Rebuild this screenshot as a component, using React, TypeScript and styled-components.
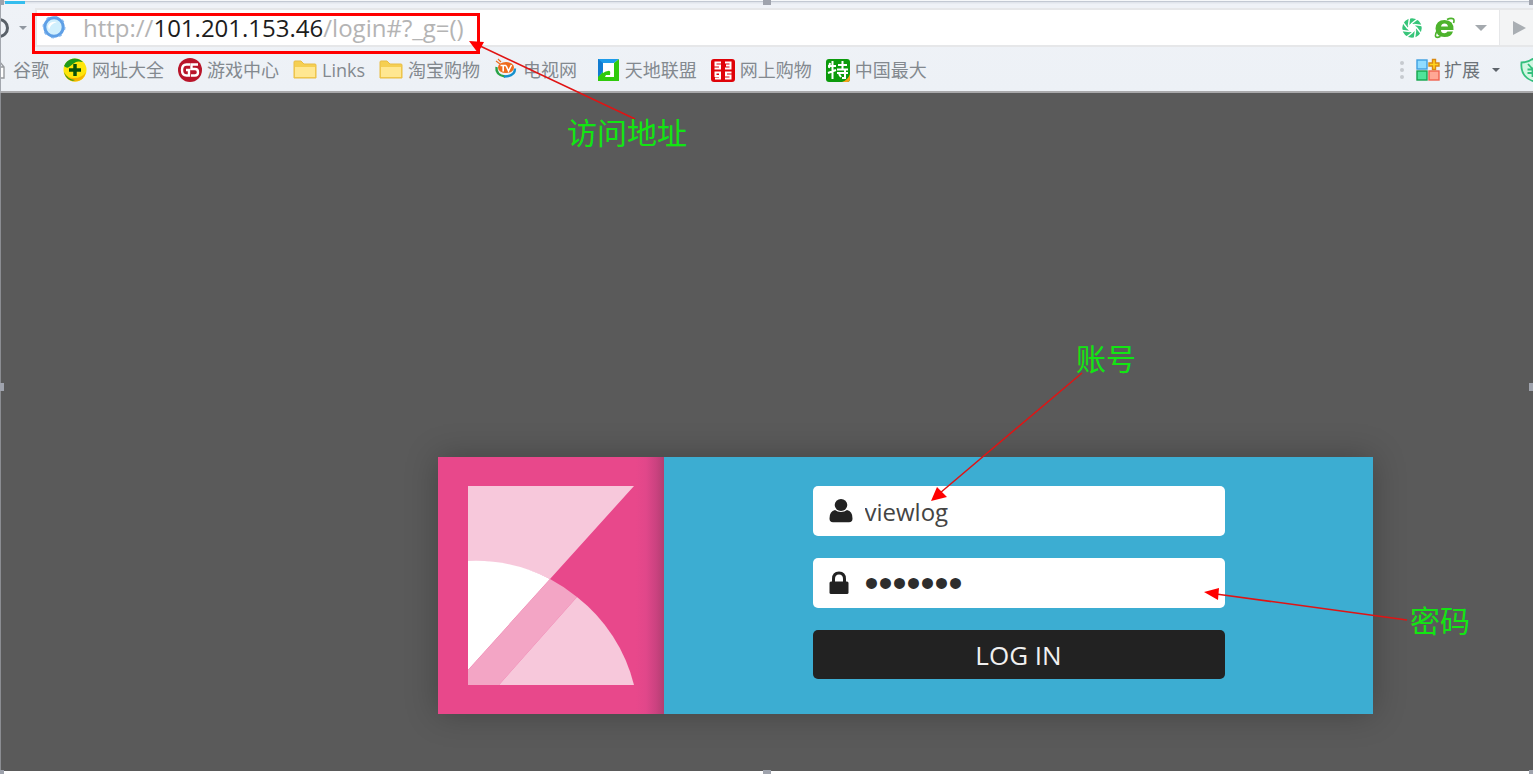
import React from "react";
import styled, { createGlobalStyle } from "styled-components";

const GlobalStyle = createGlobalStyle`
  * { box-sizing: border-box; }
  body { margin: 0; background: #fff; overflow-x: hidden; }
  svg { flex-shrink: 0; }
`;

const uiFont = `"Open Sans", "Noto Sans CJK SC", sans-serif`;

const Page = styled.div`
  position: relative;
  overflow: hidden;
  min-height: 100vh;
  padding-bottom: 3px;
  display: flex;
  flex-direction: column;
  font-family: ${uiFont};
`;

const Chrome = styled.header`
  background: linear-gradient(#eff2f7, #edf1f6);
  border-bottom: 2px solid #a9a9ab;
  border-left: 1px solid #a3a7ae;
`;

const TabStrip = styled.div`
  height: 8px;
  padding-left: 4px;
  border-top: 1px solid #f6f8fa;
  background: linear-gradient(#c3c9d3 0 1px, #e1e5ec 1px 2px, #eff2f7 3px);
`;

const ActiveTab = styled.div`
  width: 20px;
  height: 3px;
  background: #35bdee;
`;

const AddressRow = styled.div`
  display: flex;
  align-items: stretch;
  height: 39px;
`;

const NavButtons = styled.div`
  display: flex;
  align-items: center;
  width: 34px;
  overflow: hidden;
`;

const PlainButton = styled.button`
  display: flex;
  align-items: center;
  justify-content: center;
  padding: 0;
  border: 0;
  background: none;
  color: inherit;
  font: inherit;
`;

const AddressBar = styled.div`
  flex: 1;
  display: flex;
  align-items: center;
  gap: 12px;
  padding: 0 12px 0 5px;
  background: #fff;
  border: 2px solid #e6e7e9;
  border-right-width: 1px;
`;

const Url = styled.div`
  flex: 1;
  padding-left: 5px;
  font-size: 24px;
  line-height: 30px;
  color: #b4b4b4;
  white-space: nowrap;
  outline: none;
`;

const Host = styled.span`
  color: #1c1c1c;
`;

const GoButton = styled(PlainButton)`
  width: 33px;
  padding-left: 6px;
  background: #f3f4f5;
  border: solid #e6e7e9;
  border-width: 2px 0;
`;

const BookmarkRow = styled.nav`
  display: flex;
  align-items: center;
  justify-content: space-between;
  height: 44px;
  padding-top: 2px;
  overflow: hidden;
`;

const Bookmarks = styled.div`
  display: flex;
  gap: 14px;
`;

const Bookmark = styled.a`
  display: flex;
  align-items: center;
  gap: 5px;
  font-size: 18px;
  line-height: 24px;
  color: #83898f;
  text-decoration: none;
  white-space: pre;
`;

const ClippedIcon = styled.span`
  display: flex;
  justify-content: flex-end;
  width: 7px;
  padding-right: 3px;
  overflow: hidden;
`;

const Extensions = styled.div`
  display: flex;
  align-items: center;
  gap: 12px;
  color: #6c7278;
  font-size: 18px;
  line-height: 24px;
`;

const ExtensionButton = styled(PlainButton)`
  gap: 4px;
`;

const ShieldSlot = styled(PlainButton)`
  justify-content: flex-start;
  width: 13px;
  margin-left: 8px;
  overflow: hidden;
`;

const Main = styled.main`
  flex: 1;
  padding: 364px 160px 57px 437px;
  background: #5a5a5a;
  border-left: 1px solid #8b8d92;
`;

const Card = styled.section`
  display: flex;
  box-shadow: 0 0 30px rgba(0, 0, 0, 0.25);
`;

const LogoPanel = styled.div`
  display: flex;
  padding: 29px 30px;
  width: 226px;
  background: linear-gradient(to left, #b23e71 0, #cb4280 8px, #e1478a 18px, #e8488b 28px);
`;

const FormPanel = styled.form`
  flex: 1;
  display: flex;
  flex-direction: column;
  align-items: center;
  gap: 22px;
  padding: 29px 16px 35px;
  background: #3cadd2;
`;

const Field = styled.label`
  display: flex;
  align-items: center;
  width: 100%;
  max-width: 412px;
  height: 50px;
  padding: 0 16px;
  border-radius: 5px;
  background: #fff;
`;

const FieldIcon = styled.span`
  display: flex;
  width: 36px;
`;

const TextInput = styled.input`
  flex: 1;
  min-width: 0;
  height: 50px;
  padding: 0;
  border: 0;
  outline: none;
  background: none;
  color: #444;
  font-family: ${uiFont};
  font-size: 24px;
`;

const PasswordInput = styled(TextInput)`
  color: #2d2d2d;
  font-family: "Liberation Sans", sans-serif;
  font-size: 40px;
`;

const LoginButton = styled.button`
  width: 100%;
  max-width: 412px;
  height: 49px;
  padding: 0;
  border: 0;
  border-radius: 5px;
  background: #222;
  color: #f0f0f0;
  font-family: ${uiFont};
  font-size: 26px;
  line-height: 36px;
`;

const Highlight = styled.div`
  position: absolute;
  left: 32px;
  top: 13px;
  width: 448px;
  height: 41px;
  border: 3px solid #f00;
  pointer-events: none;
`;

const Arrows = styled.svg`
  position: absolute;
  left: 0;
  top: 0;
  pointer-events: none;
`;

const Note = styled.span<{ $x: number; $y: number }>`
  position: absolute;
  left: ${(p) => p.$x}px;
  top: ${(p) => p.$y}px;
  font-family: "Noto Sans CJK SC", sans-serif;
  font-size: 30px;
  line-height: 36px;
  color: #12e612;
  white-space: nowrap;
`;

const Handle = styled.i<{ $x: string; $y: string }>`
  position: absolute;
  left: ${(p) => p.$x};
  top: ${(p) => p.$y};
  width: 8px;
  height: 8px;
  margin: -4px;
  background: #9fa3ad;
`;

const Caret = ({ w, color }: { w: number; color: string }) => (
  <svg width={w} height={w / 2} viewBox="0 0 12 6"><path d="M0 0h12L6 6z" fill={color} /></svg>
);

const FolderIcon = () => (
  <svg width="24" height="24" viewBox="0 0 24 24">
    <path d="M1 20V4q0-1 1-1h6l3 3h11q1 0 1 1v13z" fill="#f5cf52" stroke="#e9bd45" />
    <path d="M2 9h20v10H2z" fill="#ffe791" />
  </svg>
);

const PlusBallIcon = () => (
  <svg width="24" height="24" viewBox="0 0 24 24">
    <circle cx="12" cy="12" r="11.500" fill="#ffe60a" />
    <path d="M1 8A11.500 11.500 0 0 1 20 4q-5-1-7 0T6 9q-2 2-5-1z" fill="#1d9a1b" />
    <path d="M1 15q4 5 10 5 8 0 12-6-2 9-11 9.500-8 0-11-8.500z" fill="#f6b400" />
    <path d="M1 14q3 7 11 8-3 1.500-6-.5-4-3-5-7.500z" fill="#2c9d1d" />
    <path d="M12 6v12M6 12h12" stroke="#07510c" strokeWidth="3.500" />
  </svg>
);

const GameIcon = () => (
  <svg width="24" height="24" viewBox="0 0 24 24">
    <circle cx="12" cy="12" r="12" fill="#b9152a" />
    <path d="M12 6.500H8.500Q4 6.500 4 12t4.500 5.500H11V12H8M20 6.500h-6.500V11H17q3 0 3 3.200t-3 3.300h-4" fill="none" stroke="#fff" strokeWidth="2.400" />
  </svg>
);

const TvIcon = () => (
  <svg width="24" height="24" viewBox="0 0 24 24">
    <path d="M2.500 9q-1 8 8.500 9.500" fill="none" stroke="#28a348" strokeWidth="2.400" />
    <path d="M10 18.500q11 0 11-8" fill="none" stroke="#1590cc" strokeWidth="2.400" />
    <ellipse cx="12" cy="9.500" rx="8" ry="5.500" fill="#ef6b1c" />
    <path d="M2 3l4 3M4 1l3 3" stroke="#ef6b1c" strokeWidth="1.200" />
    <path d="M6.500 7.500h5.500M9.200 8v5.500M12 7.500l2.500 5.500 3-6" fill="none" stroke="#fff" strokeWidth="1.600" />
  </svg>
);

const UnionIcon = () => (
  <svg width="24" height="24" viewBox="0 0 24 24">
    <path d="M2 1h21l-5 4H7v11l-5 5z" fill="#1e9bea" />
    <path d="M2 1l5 4v7l-5 8z" fill="#127bd0" />
    <path d="M23 1v22H2v-4l5-5 11-9z" fill="#2fca0c" />
    <path d="M7 5h11v14H9l1-2h4q1-5-2-4-2 0-5 2z" fill="#fff" />
  </svg>
);

const ShopIcon = () => (
  <svg width="24" height="24" viewBox="0 0 24 24">
    <rect width="24" height="23" y="1" rx="3" fill="#df0309" />
    <g fill="none" stroke="#fff" strokeWidth="2">
      <path d="M10 4.500H4.500v3H9v3H3.500M14 4.500h5.500v6H14M15 7.500h4" />
      <path d="M9 18H4.500v-3.500H9v6H4M20.500 14.500H15v3h4.500v3H14" />
    </g>
  </svg>
);

const SpecialIcon = () => (
  <svg width="24" height="24" viewBox="0 0 24 24">
    <rect width="24" height="23" y="1" rx="3" fill="#0c9a0c" />
    <path d="M24 16v5q0 3-3 3h-5q6-2 8-8z" fill="#f9a11b" />
    <path d="M4 5l-1 5M2 8h8M6.500 3v18M2 15l8-3M12 7h9M16.500 3v8M11 11.500h11M11 15h11M19 12v8h-3M13 16l2 3" fill="none" stroke="#fff" strokeWidth="2" />
  </svg>
);

const bookmarks: { label: string; icon: React.ReactNode }[] = [
  { label: "网址大全", icon: <PlusBallIcon /> },
  { label: "游戏中心", icon: <GameIcon /> },
  { label: "Links", icon: <FolderIcon /> },
  { label: "淘宝购物", icon: <FolderIcon /> },
  { label: "电视网 ", icon: <TvIcon /> },
  { label: "天地联盟", icon: <UnionIcon /> },
  { label: "网上购物", icon: <ShopIcon /> },
  { label: "中国最大", icon: <SpecialIcon /> },
];

const blades = [0, 45, 90, 135, 180, 225, 270, 315];

const ShutterIcon = () => (
  <svg width="20" height="20" viewBox="-10 -10 20 20">
    <circle r="7" fill="none" stroke="#36c579" strokeWidth="5.500" />
    {blades.map((a) => (
      <path key={a} d="M-1-4L6-9.500" stroke="#fff" strokeWidth="1.500" transform={`rotate(${a})`} />
    ))}
  </svg>
);

const BrowserEIcon = () => (
  <svg width="21" height="22" viewBox="0 0 21 22">
    <path d="M10.500 3Q2 3 1.500 11.500 2 20 10.500 20q7 0 8.500-5.500h-5.500q-1 1.800-3 1.800-3.500 0-3.500-3.300h12.500Q20 3 10.500 3zM7 9.500q.5-3 3.500-3t3.500 3z" fill="#4db32c" fillRule="evenodd" />
    <path d="M13 2.500q4-2 6.500-.5 1 1.500 0 4M3 14q-2.500 4.500-1 6 1.500 1 4.500-.8" fill="none" stroke="#4db32c" strokeWidth="1.600" />
  </svg>
);

const SiteIcon = () => (
  <svg width="24" height="24" viewBox="0 0 24 24">
    <circle cx="12" cy="11" r="9.200" fill="#d0effd" stroke="#5e9fe6" strokeWidth="3" />
    <circle cx="12" cy="11" r="10.800" fill="none" stroke="#82b6ee" strokeWidth="1.400" strokeDasharray="3 5.480" />
    <path d="M7 14q1-6 8-8-7-1-9 4z" fill="#fff" />
  </svg>
);

const GridIcon = () => (
  <svg width="24" height="24" viewBox="0 0 24 24">
    <rect x="1" y="2" width="10" height="9" fill="#90dcff" stroke="#3e9fe0" strokeWidth="1.400" />
    <rect x="1" y="13" width="10" height="9" fill="#50e39a" stroke="#13a44c" strokeWidth="1.400" />
    <rect x="13" y="13" width="10" height="9" fill="#ffa795" stroke="#ef6350" strokeWidth="1.400" />
    <path d="M16.500 1.500h3v3.500H23v3h-3.500v3.500h-3V8H13V5h3.500z" fill="#ffd51f" stroke="#d98a12" strokeWidth="1.400" />
  </svg>
);

const ShieldIcon = () => (
  <svg width="25" height="24" viewBox="0 0 25 24">
    <path d="M12.500 1Q8 4.500 1.500 4.500 0 18 12.500 23 25 18 23.500 4.500 17 4.500 12.500 1z" fill="#d2f7e2" stroke="#33bf7c" strokeWidth="1.800" />
    <path d="M8 6l4.500 5L17 6M7.500 11.500h10M7.500 15h10M12.500 11v8" fill="none" stroke="#33bf7c" strokeWidth="1.800" />
  </svg>
);

const UserIcon = () => (
  <svg width="24" height="24" viewBox="0 0 24 24">
    <path d="M6 11Q.5 12 .5 19.500.5 23.300 4 23.300h16q3.500 0 3.500-3.800 0-7.500-5.500-8.500-2.500 2-6 2t-6-2z" fill="#222" />
    <ellipse cx="12" cy="6" rx="6.300" ry="6" fill="#222" />
  </svg>
);

const LockIcon = () => (
  <svg width="21" height="24" viewBox="0 0 21 24">
    <path d="M4.500 12V8q0-6 5.500-6t5.500 6v4" fill="none" stroke="#222" strokeWidth="3" />
    <rect x=".5" y="10.500" width="19" height="12.500" rx="1.500" fill="#222" />
  </svg>
);

const Logo = () => (
  <svg width="166" height="199" viewBox="0 0 166 199">
    <path d="M0 0h166L82 93Q45 75 0 75z" fill="#f7c8db" />
    <path d="M0 75A161 161 0 0 1 82 93L0 184z" fill="#fff" />
    <path d="M82 93a161 161 0 0 1 27 18L31 199H0v-15z" fill="#f3a5c5" />
    <path d="M109 111a161 161 0 0 1 57 88H31z" fill="#f7c8db" />
  </svg>
);

export default function App() {
  return (
    <Page>
      <GlobalStyle />
      <Chrome>
        <TabStrip><ActiveTab /></TabStrip>
        <AddressRow>
          <NavButtons>
            <PlainButton aria-label="Reload">
              <svg width="18" height="24" viewBox="0 0 18 24"><path d="M-2 3.500a8 8 0 0 1 0 17" fill="none" stroke="#596068" strokeWidth="3" /></svg>
            </PlainButton>
            <PlainButton aria-label="History"><Caret w={8} color="#9097a0" /></PlainButton>
          </NavButtons>
          <AddressBar>
            <SiteIcon />
            <Url role="textbox" aria-label="Address" contentEditable suppressContentEditableWarning spellCheck={false}>
              http://<Host>101.201.153.46</Host>/login#?_g=()
            </Url>
            <PlainButton aria-label="Speed mode"><ShutterIcon /></PlainButton>
            <PlainButton aria-label="Compatibility mode"><BrowserEIcon /></PlainButton>
            <ExtensionButton aria-label="Address list"><span /><span /><Caret w={12} color="#a4a9ae" /></ExtensionButton>
          </AddressBar>
          <GoButton aria-label="Go">
            <svg width="13" height="14" viewBox="0 0 13 14"><path d="M0 0l13 7-13 7z" fill="#a9aeb3" /></svg>
          </GoButton>
        </AddressRow>
        <BookmarkRow>
          <Bookmarks>
            <Bookmark href="#">
              <ClippedIcon>
                <svg width="14" height="18" viewBox="0 0 14 18"><path d="M1 1h8l4 5v11H1zM9 1v5h4" fill="#fff" stroke="#96999d" strokeWidth="1.400" /></svg>
              </ClippedIcon>
              谷歌
            </Bookmark>
            {bookmarks.map((b) => (
              <Bookmark href="#" key={b.label}>{b.icon}{b.label}</Bookmark>
            ))}
          </Bookmarks>
          <Extensions>
            <svg width="4" height="20" viewBox="0 0 4 20">
              <g fill="#c6cacf"><circle cx="2" cy="3" r="2" /><circle cx="2" cy="10" r="2" /><circle cx="2" cy="17" r="2" /></g>
            </svg>
            <ExtensionButton><GridIcon />扩展</ExtensionButton>
            <PlainButton aria-label="More extensions"><Caret w={8} color="#5d636a" /></PlainButton>
            <ShieldSlot aria-label="Shopping guard"><ShieldIcon /></ShieldSlot>
          </Extensions>
        </BookmarkRow>
      </Chrome>
      <Main>
        <Card>
          <LogoPanel><Logo /></LogoPanel>
          <FormPanel onSubmit={(e) => e.preventDefault()}>
            <Field>
              <FieldIcon><UserIcon /></FieldIcon>
              <TextInput aria-label="Username" defaultValue="viewlog" spellCheck={false} />
            </Field>
            <Field>
              <FieldIcon><LockIcon /></FieldIcon>
              <PasswordInput aria-label="Password" type="password" defaultValue="1234567" />
            </Field>
            <LoginButton type="submit">LOG IN</LoginButton>
          </FormPanel>
        </Card>
      </Main>
      <Highlight />
      <Arrows width="1533" height="774" viewBox="0 0 1533 774">
        <g stroke="#e01414" strokeWidth="1.500">
          <path d="M635 119L478 45M1082 373L940 493M1407 620L1216 594" />
        </g>
        <g fill="#f00">
          <path d="M469 41l15 1-6 11zM931 501l6-14 10 10zM1204 592l15-4-1 12z" />
        </g>
      </Arrows>
      <Note $x={567} $y={113}>访问地址</Note>
      <Note $x={1076} $y={339}>账号</Note>
      <Note $x={1410} $y={601}>密码</Note>
      <Handle $x="0" $y="1px" />
      <Handle $x="50%" $y="1px" />
      <Handle $x="100%" $y="1px" />
      <Handle $x="0" $y="50%" />
      <Handle $x="100%" $y="50%" />
      <Handle $x="0" $y="100%" />
      <Handle $x="50%" $y="100%" />
      <Handle $x="100%" $y="100%" />
    </Page>
  );
}
